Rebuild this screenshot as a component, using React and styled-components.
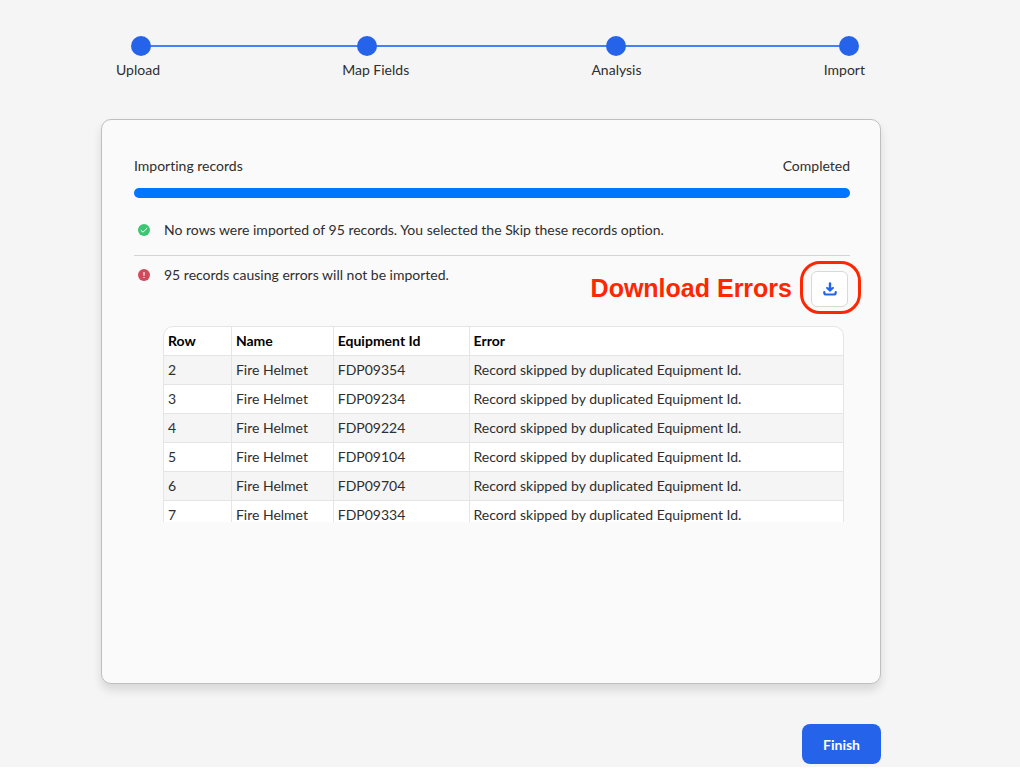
import { useState } from 'react';
import styled, { createGlobalStyle } from 'styled-components';

const steps = ['Upload', 'Map Fields', 'Analysis', 'Import'];

const columns = [
    { title: 'Row', width: '10%' },
    { title: 'Name', width: '15%' },
    { title: 'Equipment Id', width: '20%' },
    { title: 'Error', width: '55%' },
];

const duplicated = 'Record skipped by duplicated Equipment Id.';

const errors = [
    { row: 2, name: 'Fire Helmet', equipmentId: 'FDP09354', error: duplicated },
    { row: 3, name: 'Fire Helmet', equipmentId: 'FDP09234', error: duplicated },
    { row: 4, name: 'Fire Helmet', equipmentId: 'FDP09224', error: duplicated },
    { row: 5, name: 'Fire Helmet', equipmentId: 'FDP09104', error: duplicated },
    { row: 6, name: 'Fire Helmet', equipmentId: 'FDP09704', error: duplicated },
    { row: 7, name: 'Fire Helmet', equipmentId: 'FDP09334', error: duplicated },
];

function SuccessIcon(){
    return(
        <StatusIcon viewBox="0 0 12 12">
            <circle cx="6" cy="6" r="6" fill="#3cc674" />
            <path d="M2.8 6.2 L5 8.2 L9.2 4.1" fill="none" stroke="#ffffff" strokeWidth="1" />
        </StatusIcon>
    );
}

function ErrorIcon(){
    return(
        <StatusIcon viewBox="0 0 12 12">
            <circle cx="6" cy="6" r="6" fill="#d1495b" />
            <path d="M6 3 V6.7 M6 7.9 V9" fill="none" stroke="#ffffff" strokeWidth="1.1" />
        </StatusIcon>
    );
}

function DownloadIcon(){
    return(
        <svg width="14" height="14" viewBox="0 0 14 14" stroke="#2563eb" strokeLinecap="round" strokeLinejoin="round">
            <path d="M7 1.4 V7" fill="none" strokeWidth="2.4" />
            <path d="M3.8 5.8 L7 8.8 L10.2 5.8 L7 7 Z" fill="#2563eb" strokeWidth="1.6" />
            <path d="M1.3 10 V10.8 Q1.3 12.5 3 12.5 H11 Q12.7 12.5 12.7 10.8 V10" fill="none" strokeWidth="2.2" />
        </svg>
    );
}

function App(){
    const [progress] = useState(100);

    return(
        <>
            <GlobalStyle />
            <Page>
                <Stepper>
                    {steps.map((step) => (
                        <Step key={step}>
                            <StepDot />
                            {step}
                        </Step>
                    ))}
                </Stepper>
                <Card>
                    <ProgressHeader>
                        <label htmlFor="import-progress">Importing records</label>
                        <span>Completed</span>
                    </ProgressHeader>
                    <ProgressBar id="import-progress" value={progress} max="100" />
                    <Message $divider>
                        <SuccessIcon />
                        <p>No rows were imported of 95 records. You selected the Skip these records option.</p>
                    </Message>
                    <Message>
                        <ErrorIcon />
                        <p>95 records causing errors will not be imported.</p>
                        <DownloadArea>
                            <DownloadButton type="button" aria-labelledby="download-label">
                                <DownloadIcon />
                            </DownloadButton>
                            <Highlight />
                            <Callout id="download-label">Download Errors</Callout>
                        </DownloadArea>
                    </Message>
                    <TableScroll>
                        <ErrorTable>
                            <thead>
                                <tr>
                                    {columns.map((column) => (
                                        <HeaderCell key={column.title} $width={column.width}>
                                            {column.title}
                                        </HeaderCell>
                                    ))}
                                </tr>
                            </thead>
                            <tbody>
                                {errors.map((item) => (
                                    <ErrorRow key={item.row}>
                                        <td>{item.row}</td>
                                        <td>{item.name}</td>
                                        <td>{item.equipmentId}</td>
                                        <td>{item.error}</td>
                                    </ErrorRow>
                                ))}
                            </tbody>
                        </ErrorTable>
                    </TableScroll>
                </Card>
                <Actions>
                    <FinishButton type="button">Finish</FinishButton>
                </Actions>
            </Page>
        </>
    );
}

const GlobalStyle = createGlobalStyle`
* {
    box-sizing: border-box;
}
body {
    margin: 0;
    background: #ffffff;
    color: #2e2e2e;
    font-family: Lato, "Liberation Sans", sans-serif;
    font-size: 14px;
    line-height: 20px;
    font-variant-ligatures: none;
}
p {
    margin: 0;
}
`;

const Page = styled.main`
background: #f5f5f5;
padding: 36px 139px 3px 101px;
`;

const Stepper = styled.ol`
display: flex;
justify-content: space-between;
position: relative;
list-style: none;
margin: 0;
padding: 0 16px 0 15px;
/* line behind the dots */
&::before {
    content: '';
    position: absolute;
    top: 9px;
    left: 40px;
    right: 32px;
    height: 2px;
    background: #4880fb;
}
`;

const Step = styled.li`
display: flex;
flex-direction: column;
gap: 4px;
position: relative;
`;

const StepDot = styled.span`
width: 20px;
height: 20px;
margin-left: 15px;
border-radius: 50%;
background: #2563eb;
`;

const Card = styled.section`
min-height: 565px;
margin-top: 39px;
padding: 36px 30px 36px 32px;
background: #fafafa;
border: 1px solid #bfbfbf;
border-radius: 10px;
box-shadow: 0 6px 10px rgba(0, 0, 0, 0.12);
`;

const ProgressHeader = styled.div`
display: flex;
justify-content: space-between;
`;

const ProgressBar = styled.progress`
appearance: none;
display: block;
width: 100%;
height: 10px;
margin: 12px 0;
border: none;
border-radius: 5px;
overflow: hidden;
&::-webkit-progress-bar {
    background: #e5e5e5;
}
&::-webkit-progress-value {
    background: #0075ff;
}
`;

const Message = styled.div`
display: flex;
gap: 14px;
padding: ${(props) => props.$divider ? '10px 0 15px 4px' : '9px 2px 0 4px'};
border-bottom: ${(props) => props.$divider ? '1px solid #d4d4d4' : 'none'};
p {
    flex: 1;
}
`;

const StatusIcon = styled.svg`
width: 12px;
height: 12px;
margin-top: 4px;
flex-shrink: 0;
`;

const DownloadArea = styled.div`
position: relative;
margin-top: 6px;
`;

const DownloadButton = styled.button`
display: flex;
align-items: center;
justify-content: center;
width: 37px;
height: 36px;
padding: 0;
background: #ffffff;
border: 1px solid #d9d9d9;
border-radius: 6px;
cursor: pointer;
`;

const Highlight = styled.div`
position: absolute;
top: -10px;
right: -13px;
bottom: -7px;
left: -11px;
border: 3px solid #ff2600;
border-radius: 20px;
pointer-events: none;
`;

const Callout = styled.span`
position: absolute;
top: 2px;
right: 56px;
color: #ff2600;
font-family: "Liberation Sans", Arial, sans-serif;
font-size: 25px;
font-weight: 700;
line-height: 30px;
white-space: nowrap;
`;

const TableScroll = styled.div`
height: 196px;
margin: 19px 6px 0 29px;
overflow-y: auto;
scrollbar-width: none;
`;

const ErrorTable = styled.table`
width: 100%;
table-layout: fixed;
border-collapse: separate;
border-spacing: 0;
border: 1px solid #e5e5e5;
border-radius: 10px;
overflow: hidden;
background: #ffffff;
th, td {
    height: 29px;
    padding: 4px;
    border-bottom: 1px solid #e5e5e5;
    border-right: 1px solid #e5e5e5;
    text-align: left;
}
th:last-child, td:last-child {
    border-right: none;
}
`;

const HeaderCell = styled.th`
width: ${(props) => props.$width};
color: #000000;
font-weight: 700;
`;

const ErrorRow = styled.tr`
&:nth-child(odd) {
    background: #f5f5f5;
}
`;

const Actions = styled.div`
display: flex;
justify-content: flex-end;
margin-top: 40px;
`;

const FinishButton = styled.button`
height: 40px;
padding: 0 21px;
background: #2563eb;
border: none;
border-radius: 8px;
color: #ffffff;
font-family: inherit;
font-size: 14px;
font-weight: 700;
cursor: pointer;
`;

export default App;
